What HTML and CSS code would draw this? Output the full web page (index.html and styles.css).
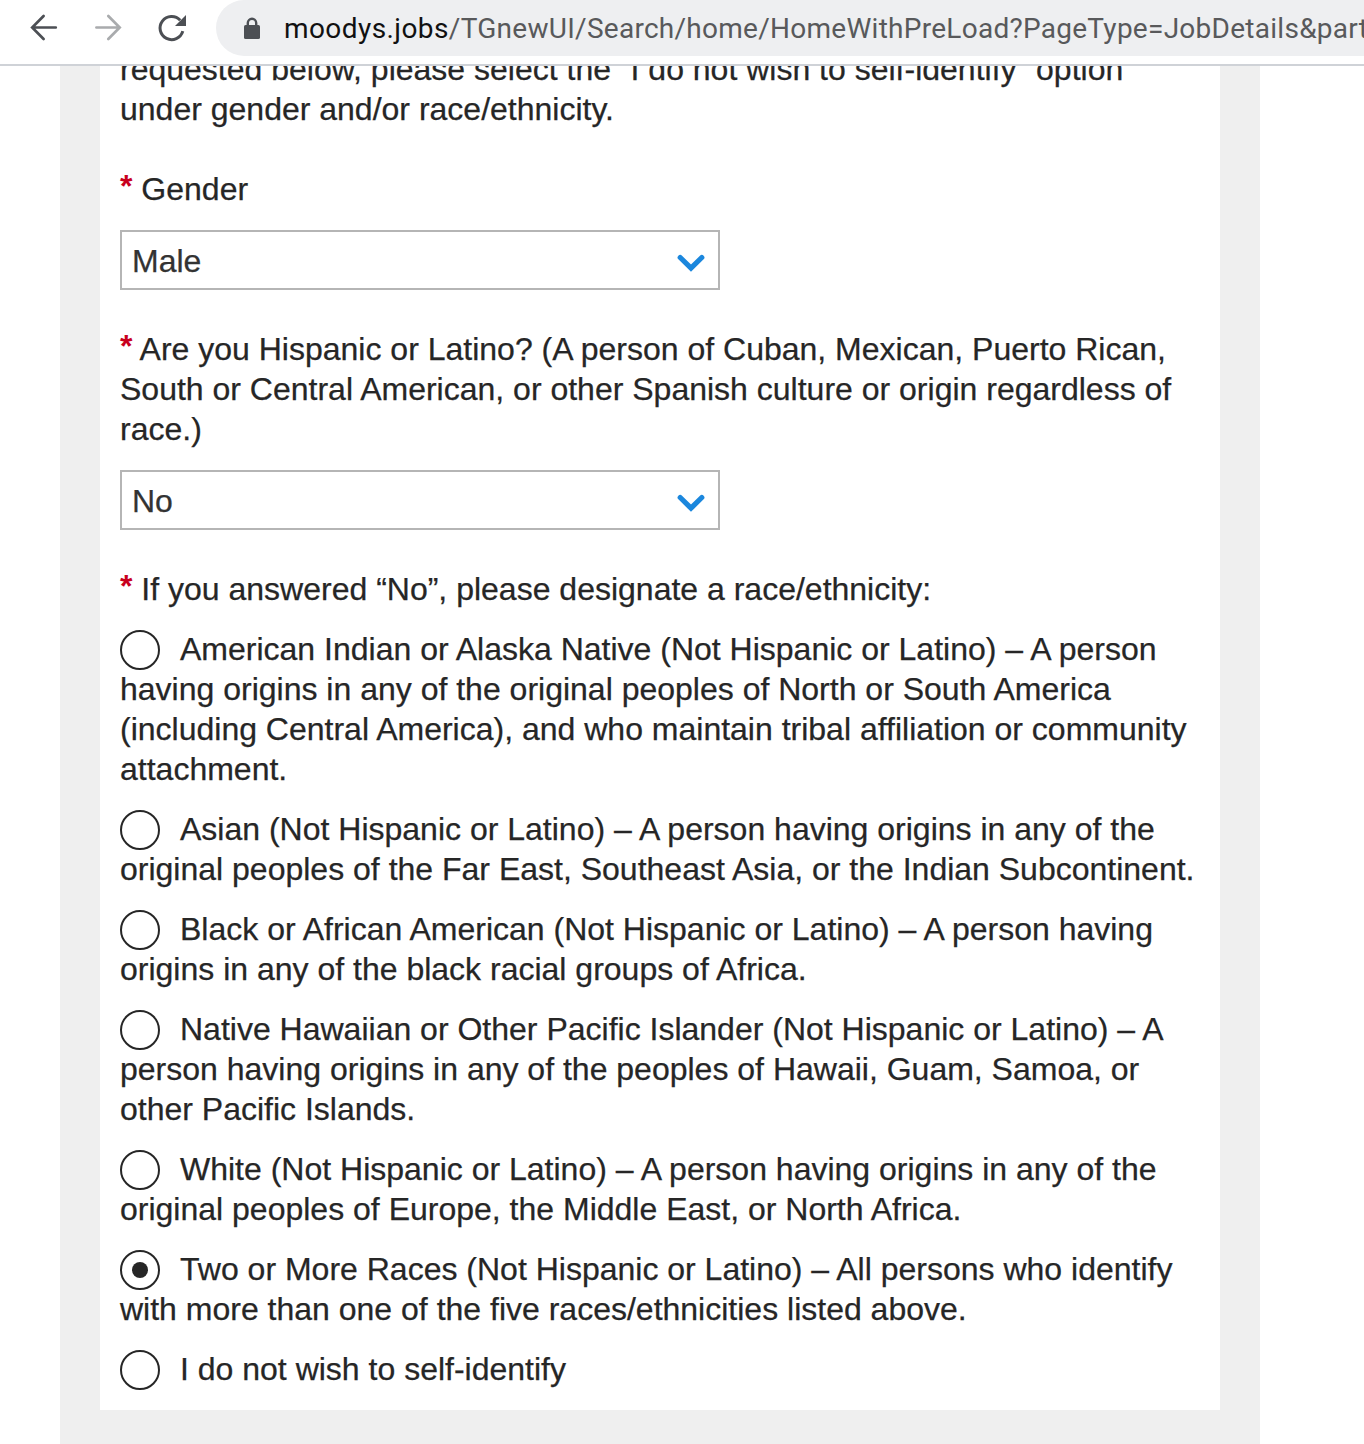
FILE: index.html
```html
<!DOCTYPE html>
<html lang="en">
<head>
<meta charset="utf-8">
<title>Voluntary self-identification</title>
<link rel="stylesheet" href="styles.css">
</head>
<body>
<header class="toolbar">
  <svg class="nav-icon" width="40" height="40" viewBox="0 0 40 40"><path d="M35.8 19.5H12.5M23.6 8L12.2 19.5L23.6 31"/></svg>
  <svg class="nav-icon nav-icon-off" width="40" height="40" viewBox="0 0 40 40"><path d="M12.4 19.5H35.6M24.3 8L35.7 19.5L24.3 31"/></svg>
  <svg class="nav-icon reload" width="40" height="40" viewBox="0 0 40 40"><path d="M34.8 23.2A11.6 11.6 0 1 1 32.2 12.2"/><path class="solid" d="M38 7V18H27Z"/></svg>
  <div class="address">
    <svg class="lock" width="18" height="24" viewBox="0 0 18 24"><path class="shackle" d="M4.8 9V6a4.2 4.2 0 0 1 8.4 0v3"/><rect x="1" y="8" width="16" height="14" rx="1.6"/></svg>
    <span class="url"><span class="host">moodys.jobs</span>/TGnewUI/Search/home/HomeWithPreLoad?PageType=JobDetails&amp;part</span>
  </div>
</header>
<main class="page">
  <form class="card">
    <p class="intro">requested below, please select the “I do not wish to self-identify” option<br>under gender and/or race/ethnicity.</p>
    <p class="question"><span class="required">*</span> Gender</p>
    <div class="select"><span class="value">Male</span><svg class="chevron" width="28" height="18" viewBox="0 0 28 18"><path d="M3.2 3.5L14 14.2L24.8 3.5"/></svg></div>
    <p class="question"><span class="required">*</span> Are you Hispanic or Latino? (A person of Cuban, Mexican, Puerto Rican,<br>South or Central American, or other Spanish culture or origin regardless of<br>race.)</p>
    <div class="select"><span class="value">No</span><svg class="chevron" width="28" height="18" viewBox="0 0 28 18"><path d="M3.2 3.5L14 14.2L24.8 3.5"/></svg></div>
    <p class="question"><span class="required">*</span> If you answered “No”, please designate a race/ethnicity:</p>
    <div class="options">
      <label class="option"><span class="radio"></span>American Indian or Alaska Native (Not Hispanic or Latino) – A person<br>having origins in any of the original peoples of North or South America<br>(including Central America), and who maintain tribal affiliation or community<br>attachment.</label>
      <label class="option"><span class="radio"></span>Asian (Not Hispanic or Latino) – A person having origins in any of the<br>original peoples of the Far East, Southeast Asia, or the Indian Subcontinent.</label>
      <label class="option"><span class="radio"></span>Black or African American (Not Hispanic or Latino) – A person having<br>origins in any of the black racial groups of Africa.</label>
      <label class="option"><span class="radio"></span>Native Hawaiian or Other Pacific Islander (Not Hispanic or Latino) – A<br>person having origins in any of the peoples of Hawaii, Guam, Samoa, or<br>other Pacific Islands.</label>
      <label class="option"><span class="radio"></span>White (Not Hispanic or Latino) – A person having origins in any of the<br>original peoples of Europe, the Middle East, or North Africa.</label>
      <label class="option"><span class="radio checked"></span>Two or More Races (Not Hispanic or Latino) – All persons who identify<br>with more than one of the five races/ethnicities listed above.</label>
      <label class="option"><span class="radio"></span>I do not wish to self-identify</label>
    </div>
  </form>
</main>
</body>
</html>
```
FILE: styles.css
```css
* { box-sizing: border-box; }
body {
  margin: 0;
  height: 1444px;
  overflow: hidden;
  display: flex;
  flex-direction: column;
  background: #fff;
  color: #262626;
  font: 32px/40px "Liberation Sans", Arial, sans-serif;
  -webkit-text-stroke: 0.25px;
}
.toolbar {
  flex: none;
  height: 66px;
  display: flex;
  gap: 24px;
  padding: 0 0 8px 20px;
  border-bottom: 2px solid #cfd2d7;
  overflow: hidden;
}
.nav-icon {
  flex: none;
  margin-top: 8px;
  fill: none;
  stroke: #4c4f54;
  stroke-width: 2.7;
  stroke-linecap: round;
}
.nav-icon-off { stroke: #a9abad; }
.reload { stroke-width: 3; stroke-linecap: butt; }
.reload .solid { fill: #4c4f54; stroke: none; }
.address {
  flex: none;
  width: 1200px;
  height: 56px;
  margin-left: 4px;
  padding-left: 27px;
  display: flex;
  align-items: center;
  gap: 23px;
  border-radius: 28px;
  background: #eeeff1;
}
.lock { flex: none; margin-bottom: -2px; fill: #4c4f54; }
.lock .shackle { fill: none; stroke: #4c4f54; stroke-width: 2.4; }
.url {
  padding-top: 1px;
  font: 28px/56px Roboto, sans-serif;
  letter-spacing: 0.27px;
  color: #58595b;
  white-space: nowrap;
  -webkit-text-stroke: 0;
}
.host { color: #111; letter-spacing: 0.42px; }
.page {
  flex: 1;
  min-height: 0;
  width: 1200px;
  margin-left: 60px;
  padding: 0 40px;
  overflow: hidden;
  background: #efefef;
}
.card {
  height: 1344px;
  padding: 0 20px;
  overflow: hidden;
  background: #fff;
  white-space: nowrap;
}
.intro { margin: -17px 0 40px; }
.question { margin: 0 0 21px; }
.required {
  color: #c8001e;
  font-weight: bold;
  line-height: 0;
  vertical-align: 3px;
  -webkit-text-stroke: 0;
}
.select {
  display: flex;
  align-items: center;
  justify-content: space-between;
  width: 600px;
  height: 60px;
  margin-bottom: 39px;
  padding: 0 13px 0 10px;
  border: 2px solid #b5b5b5;
  color: #333;
}
.value { padding-top: 1px; }
.chevron {
  margin: 6px 0.5px 0 0;
  fill: none;
  stroke: #1b87dd;
  stroke-width: 5.2;
  stroke-linecap: round;
}
.options {
  display: flex;
  flex-direction: column;
  gap: 20px;
  margin-top: -1px;
}
.option { display: block; }
.radio {
  display: inline-flex;
  align-items: center;
  justify-content: center;
  width: 40px;
  height: 40px;
  margin: 0 20px -1px 0;
  vertical-align: top;
  position: relative;
  top: 1px;
  border: 2px solid #262626;
  border-radius: 50%;
}
.checked::after {
  content: "";
  width: 16px;
  height: 16px;
  border-radius: 50%;
  background: #262626;
}
```
